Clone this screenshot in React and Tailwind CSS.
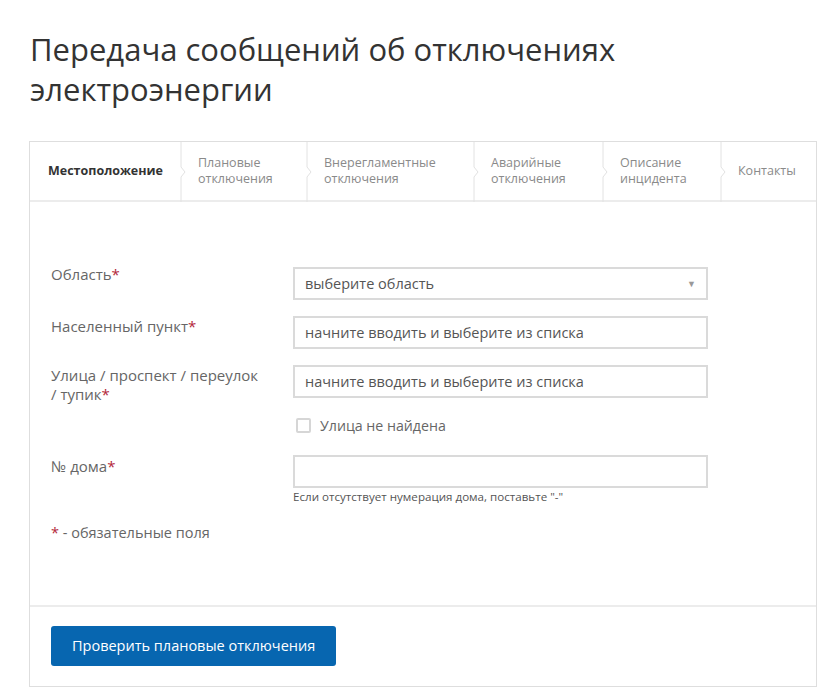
const tabs = [
  { label: 'Местоположение', active: true, w: 158 },
  { label: ['Плановые', 'отключения'], w: 126 },
  { label: ['Внерегламентные', 'отключения'], w: 167 },
  { label: ['Аварийные', 'отключения'], w: 129 },
  { label: ['Описание', 'инцидента'], w: 118 },
  { label: 'Контакты' },
];

function Divider() {
  return (
    <svg width="8" height="60" viewBox="0 0 8 60" className="shrink-0">
      <path d="M1 0 V25 L5 30 L1 35 V60" fill="none" stroke="#e2e2e2" strokeWidth="1" />
    </svg>
  );
}

function Req() {
  return <span className="text-[#b3263a]">*</span>;
}

function Row({ label, children, top = 'mt-0' }) {
  return (
    <div className={`flex ${top}`}>
      <div className="w-[242px] shrink-0 text-[15px] leading-[19px] text-[#666]">{label}</div>
      <div className="w-[415px]">{children}</div>
    </div>
  );
}

export default function App() {
  return (
    <div className="bg-white min-h-[694px] font-['Open_Sans',sans-serif]">
      <h1 className="pl-[30px] pt-[29px] text-[31px] leading-[40px] text-[#333] font-['Open_Sans',sans-serif]">
        Передача сообщений об отключениях
        <br />
        электроэнергии
      </h1>

      <div className="mt-[32px] ml-[29px] w-[788px] border border-[#dedede]">
        <div className="flex h-[60px] border-b-2 border-[#ececec] items-stretch">
          {tabs.map((t, i) => (
            <div
              key={i}
              className={`flex items-stretch ${t.w ? 'shrink-0' : 'flex-1'}`}
              style={t.w ? { width: t.w } : undefined}
            >
              <div
                className={`flex-1 flex items-center text-[12.5px] leading-[16px] ${
                  i === 0 ? 'pl-[18px] font-bold text-[#333]' : 'pl-[10px] text-[#8a8a8a]'
                }`}
              >
                {Array.isArray(t.label) ? (
                  <span>
                    {t.label[0]}
                    <br />
                    {t.label[1]}
                  </span>
                ) : (
                  <span>{t.label}</span>
                )}
              </div>
              {i < tabs.length - 1 && <Divider />}
            </div>
          ))}
        </div>

        <div className="pl-[21px] pt-[63px] pb-[61px] border-b-2 border-[#ececec]">
          <Row label={<>Область<Req /></>}>
            <div className="mt-[2px] h-[33px] border-2 border-[#dadada] flex items-center justify-between px-[10px] text-[14.5px] text-[#555]">
              <span>выберите область</span>
              <span className="text-[9px] text-[#999]">▼</span>
            </div>
          </Row>
          <Row top="mt-[17px]" label={<>Населенный пункт<Req /></>}>
            <div className="mt-[-1px] h-[33px] border-2 border-[#dadada] flex items-center px-[10px] text-[14.5px] text-[#555]">
              начните вводить и выберите из списка
            </div>
          </Row>
          <Row top="mt-[17px]" label={<>Улица / проспект / переулок<br />/ тупик<Req /></>}>
            <div className="mt-[-1px] h-[33px] border-2 border-[#dadada] flex items-center px-[10px] text-[14.5px] text-[#555]">
              начните вводить и выберите из списка
            </div>
            <label className="mt-[17px] flex items-center gap-[9px] pl-[3px] text-[14.2px] text-[#666]">
              <span className="w-[15px] h-[15px] border-2 border-[#d6d6d6] rounded-[2px] bg-white" />
              Улица не найдена
            </label>
          </Row>
          <Row top="mt-[21px]" label={<>№ дома<Req /></>}>
            <div className="mt-[-2px] h-[33px] border-2 border-[#dadada]" />
            <div className="mt-[2px] text-[11.6px] leading-[14px] text-[#555]">
              Если отсутствует нумерация дома, поставьте "-"
            </div>
          </Row>
          <div className="mt-[18px] text-[14.5px] text-[#666]">
            <Req /> - обязательные поля
          </div>
        </div>

        <div className="pl-[21px] pt-[19px] pb-[20px]">
          <button className="h-[40px] px-[21px] rounded-[3px] bg-[#0766b0] text-white text-[14.5px]">
            Проверить плановые отключения
          </button>
        </div>
      </div>
    </div>
  );
}
